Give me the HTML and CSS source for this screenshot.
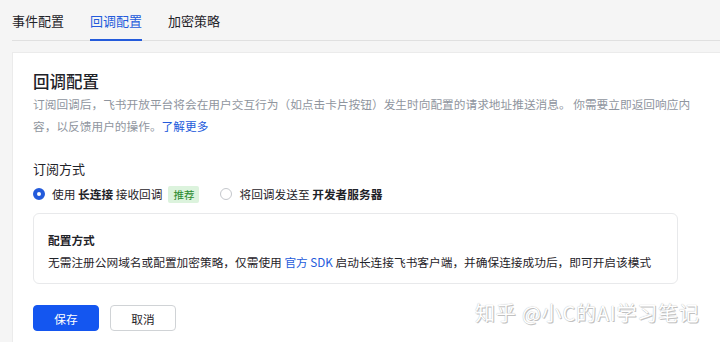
FILE: index.html
```html
<!DOCTYPE html>
<html lang="zh-CN">
<head>
    <meta charset="UTF-8">
    <meta name="viewport" content="width=device-width, initial-scale=1.0">
    <title>回调配置</title>
    <link rel="stylesheet" href="styles.css">
</head>
<body>
    <nav class="tabs">
        <span class="tab">事件配置</span>
        <span class="tab active">回调配置</span>
        <span class="tab">加密策略</span>
    </nav>
    <div class="card">
        <h1 class="title">回调配置</h1>
        <p class="desc"><span>订阅回调后，飞书开放平台将会在用户交互行为（如点击卡片按钮）发生时向配置的请求地址推送消息。 你需要立即返回响应内容，以反馈用户的操作。</span><a class="link">了解更多</a></p>

        <h2 class="section-title">订阅方式</h2>
        <div class="radio-group">
            <label class="radio checked">
                <span class="dot"></span>
                <span>使用 <b>长连接</b> 接收回调</span>
                <span class="tag">推荐</span>
            </label>
            <label class="radio">
                <span class="dot"></span>
                <span>将回调发送至 <b>开发者服务器</b></span>
            </label>
        </div>

        <div class="mode-box">
            <div class="mode-title">配置方式</div>
            <div class="mode-text"><span>无需注册公网域名或配置加密策略，仅需使用 </span><a class="link">官方 SDK</a><span> 启动长连接飞书客户端，并确保连接成功后，即可开启该模式</span></div>
        </div>

        <div class="actions">
            <button class="btn primary">保存</button>
            <button class="btn">取消</button>
        </div>
    </div>
    <div class="watermark">知乎 @小C的AI学习笔记</div>
</body>
</html>
```

FILE: styles.css
```css
html, body {
    margin: 0;
    padding: 0;
    height: 100%;
    overflow: hidden;
}
body {
    font-family: "Noto Sans CJK SC", "Noto Sans", sans-serif;
    background: #f5f5f5;
    color: #1f2329;
    padding-left: 12px;
    position: relative;
}
.tabs {
    display: flex;
    gap: 26px;
    height: 41px;
    border-bottom: 1px solid #e0e0e0;
    box-sizing: border-box;
    font-size: 13px;
}
.tab {
    display: flex;
    align-items: center;
    height: 40px;
    box-sizing: border-box;
    margin-bottom: -1px;
    color: #1f2329;
}
.tab.active {
    color: #245bdb;
    border-bottom: 2px solid #245bdb;
    height: 41px;
    padding-top: 1px;
}
.card {
    margin-top: 11px;
    background: #fff;
    border: 1px solid #ebebeb;
    border-right: none;
    padding: 17px 0 0 20px;
    height: 320px;
}
.title {
    margin: 0;
    font-size: 16.5px;
    font-weight: 500;
    line-height: 23px;
}
.desc {
    margin: 0;
    width: 664px;
    font-size: 11.7px;
    line-height: 22px;
    color: #8f959e;
}
.link {
    color: #245bdb;
    cursor: pointer;
}
.section-title {
    margin: 22px 0 0;
    font-size: 13px;
    font-weight: 400;
    line-height: 20px;
}
.radio-group {
    display: flex;
    gap: 21px;
    margin-top: 5px;
    font-size: 11.7px;
    line-height: 20px;
}
.radio {
    display: flex;
    align-items: center;
    gap: 7px;
}
.radio b {
    font-weight: 600;
}
.dot {
    width: 12px;
    height: 12px;
    border: 1px solid #c4c7cc;
    border-radius: 50%;
    box-sizing: border-box;
    background: #fff;
}
.radio.checked .dot {
    border: 4px solid #245bdb;
}
.tag {
    margin-left: -1px;
    padding: 0 5px;
    background: #dcf3dd;
    color: #2a8a2e;
    font-size: 10.5px;
    line-height: 17px;
    border-radius: 2px;
}
.mode-box {
    margin-top: 9px;
    width: 645px;
    box-sizing: border-box;
    border: 1px solid #e8e9eb;
    border-radius: 6px;
    padding: 17px 14px 12px;
    font-size: 11.7px;
    line-height: 18px;
}
.mode-title {
    font-weight: 600;
}
.mode-text {
    margin-top: 4px;
}
.actions {
    display: flex;
    gap: 11px;
    margin-top: 21px;
}
.btn {
    width: 66px;
    height: 26px;
    font-family: inherit;
    font-size: 11.7px;
    border: 1px solid #d0d3d6;
    border-radius: 4px;
    background: #fff;
    color: #1f2329;
    cursor: pointer;
}
.btn.primary {
    background: #1456f0;
    border-color: #1456f0;
    color: #fff;
}
.watermark {
    position: absolute;
    left: 475px;
    top: 298px;
    font-size: 20px;
    letter-spacing: 0.8px;
    color: #fff;
    text-shadow: 0 0 1px #a8a8a8, 1px 1px 0 #c4c4c4;
    white-space: nowrap;
}
```
